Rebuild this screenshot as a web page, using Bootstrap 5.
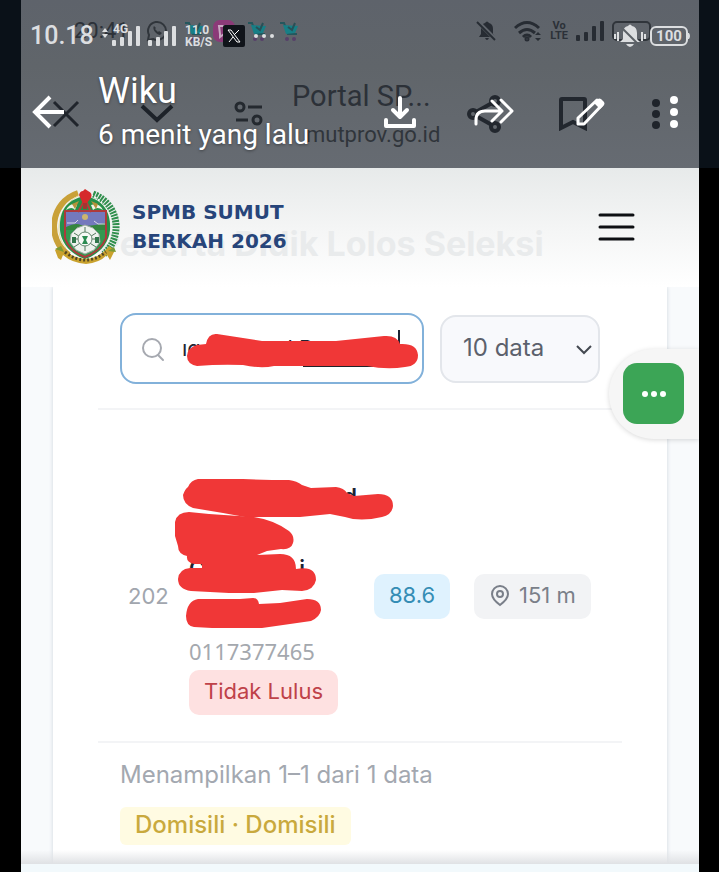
<!DOCTYPE html>
<html lang="id">
<head>
<meta charset="utf-8">
<meta name="viewport" content="width=device-width, initial-scale=1">
<title>SPMB Sumut Berkah 2026</title>
<link href="https://cdn.jsdelivr.net/npm/bootstrap@5.3.0/dist/css/bootstrap.min.css" rel="stylesheet">
<style>
body{background:#000;font-family:Inter,"Noto Sans",sans-serif;color:#5f6470}
svg{display:block;flex:none}
button{border:0;background:none;padding:0}
.viewer{background:#0a1118;padding:0 20px 0 21px;font-family:Roboto,sans-serif}
.viewer-in{height:168px;background:linear-gradient(#5e636b,#60656a 40%,#666b72)}
.layer{position:absolute;inset:0}
.under{color:#2c3138;padding-top:16px}
.over{color:#fff;padding-top:20px}
.srow{height:30px}
.srow-over{height:32px;color:#dcdee0}
.clock-under{font-size:22px;line-height:30px;margin-left:53px;width:72px}
.clock-over{font-size:25px;line-height:30px;font-weight:500;margin-left:9px;width:72px}
.volte{font-size:11px;line-height:10px;font-weight:700;text-align:center}
.rate{font-size:12px;line-height:12px;font-weight:700;width:38px}
.net{font-size:12px;line-height:11px;font-weight:700;left:11px;top:2px}
.battery{border:2px solid #dcdee0;border-radius:6px;font-size:15px;line-height:16px;font-weight:700;width:38px;text-align:center}
.battery-under{border:2px solid #30353b;border-radius:5px;width:39px;height:20px}
.brow{height:72px;margin-top:32px;padding:0 38px 0 31px}
.brow-over{height:80px;margin-top:20px;padding:0 20px 0 11px}
.tab-title{font-size:29px;line-height:36px}
.tab-url{font-size:22px;line-height:30px;padding-left:14px;margin-top:6px;color:#30353b}
.who{font-size:36px;line-height:40px;text-shadow:0 1px 3px rgba(0,0,0,.4)}
.when{font-size:28px;line-height:36px;margin-top:6px;text-shadow:0 1px 3px rgba(0,0,0,.4)}
.sheet{margin:0 20px 0 21px;background:#f8fafc}
.site-nav{height:119px;background:linear-gradient(#e7eaea,#f4f5f5 50%,#fff);padding:0 64px 2px 31px}
.ghost{position:absolute;left:77px;top:56px;font-size:34px;line-height:40px;font-weight:700;color:#e9ebec}
.brand{font-family:"DejaVu Sans",sans-serif;font-size:20px;line-height:29px;font-weight:700;color:#27457a}
.panel{margin:0 32px;padding:26px 45px 0;background:#fff;box-shadow:0 0 4px #cdd5dc}
.tools{padding:0 22px 24px;border-bottom:2px solid #f3f4f6}
.search{border:2px solid #82b1da;border-radius:16px;height:71px;background:#fff;padding-left:18px}
.search input{border:0;outline:0;width:100%;min-width:0;background:none;font-size:22px;color:#1c2434;padding:0}
.pick{width:160px;height:68px;border:2px solid #e3e6eb;border-radius:16px;background-color:#f8f9fc;color:#5c616c;font-size:24px;padding:0 0 2px 21px;background-position:right 4px center;background-size:20px;background-image:url("data:image/svg+xml,%3Csvg xmlns='http://www.w3.org/2000/svg' viewBox='0 0 20 20'%3E%3Cpath d='M3 7l7 7 7-7' fill='none' stroke='%23444951' stroke-width='2'/%3E%3C/svg%3E")}
.results{margin-top:42px;border-bottom:2px solid #f3f4f6;--bs-table-bg:transparent}
.results td{border:0;padding:0;color:#a1a6ae}
.no-col{width:91px;font-size:22px;padding-left:30px!important}
.who-col{padding:26px 0!important}
.hidden-name{font-size:22px;line-height:36px;font-weight:600;color:#1c2434;width:168px;height:160px}
.hidden-name .second{width:116px}
.nisn{font-family:"Noto Sans",sans-serif;font-size:22px;line-height:26px;color:#a4a8ae;margin:0 0 6px}
.chip{display:inline-flex;align-items:center;border-radius:10px;height:45px;padding:0 15px 2px;font-size:22px;white-space:nowrap}
.fail{background:#fee1e1;color:#bf4249}
.score{background:#dff2fe;color:#348db5}
.dist{background:#f2f3f5;color:#7a7f89}
.score-col{width:100px}.dist-col{width:148px}
.foot{padding:14px 22px 18px}
.count{font-size:24px;line-height:36px;color:#a3a8b0;margin:0 0 14px}
.lane{background:#fffbe2;color:#c9a93d;font-weight:500;font-size:24px;height:38px;border-radius:6px}
.float-tab{position:absolute;right:0;top:181px;width:90px;height:90px;border-radius:45px 0 0 45px;background:#f6f6f6;box-shadow:0 1px 5px rgba(0,0,0,.15);padding:14px}
.float-tab button{width:61px;height:61px;border-radius:14px;background:#3ca556}
.shade{height:14px;margin-top:-14px;background:linear-gradient(rgba(210,213,216,0),#dfe1e4);position:relative}
.base{min-height:8px;background:#f2f9fc}
.mask-search{position:absolute;left:62px;top:14px}
.mask-name{position:absolute;left:-14px;top:-2px}
</style>
<script src="https://cdn.jsdelivr.net/npm/bootstrap@5.3.0/dist/js/bootstrap.bundle.min.js"></script>
</head>
<body class="min-vh-100 d-flex flex-column">
<svg width="0" height="0" class="position-absolute" aria-hidden="true">
<defs>
<g id="cart"><path d="M1 3h4l4 11h9" fill="none" stroke="#24575d" stroke-width="2"/><path d="M4 5l15 1-3 7-9 1z" fill="#177f86"/><path d="M9 7l4 3 3-7" fill="none" stroke="#285057" stroke-width="2"/><circle cx="8" cy="19" r="2" fill="#574069"/><circle cx="15" cy="19" r="2" fill="#574069"/></g>
<g id="bars"><rect y="15" width="4" height="6" rx="1"/><rect x="8" y="12" width="4" height="9" rx="1"/><rect x="16" y="6" width="4" height="15" rx="1"/><rect x="24" y="1" width="4" height="20" rx="1"/></g>
</defs>
</svg>
<header class="viewer">
<div class="viewer-in position-relative">
<div class="layer under">
 <div class="srow d-flex align-items-center">
  <span class="clock-under">20:41</span>
  <svg width="22" height="22" viewBox="0 0 22 22" fill="none" stroke="#30353b" stroke-width="2"><path d="M2 20l1-5a9 9 0 1 1 4 4z"/><path d="M8 6c-2 2 1 8 6 9l2-2-3-2-1 1-3-3 1-1z" fill="#30353b" stroke="none"/></svg>
  <svg class="ms-3" width="20" height="22"><use href="#cart"/></svg>
  <svg class="ms-2" width="24" height="24"><rect x="1" y="1" width="22" height="22" rx="7" fill="#8b3a78"/><path d="M7 7h10v8h-5l-4 3v-3z" fill="none" stroke="#c9a9c3" stroke-width="2"/></svg>
  <svg class="ms-2" width="24" height="22"><use href="#cart" x="3"/></svg>
  <svg class="ms-2" width="24" height="22"><use href="#cart" x="3"/></svg>
  <svg class="ms-auto" width="22" height="22" viewBox="0 0 22 22" fill="#272c33"><path d="M3 17l2-3V9q0-5 4-6 2-3 4 0 4 1 4 6v5l2 3zM9 18h4q-2 4-4 0"/><path d="M2 2l18 18" stroke="#60656c" stroke-width="4"/><path d="M1 2l18 18" stroke="#272c33" stroke-width="2"/></svg>
  <svg class="ms-3 me-2" width="28" height="22" viewBox="0 0 28 22" fill="none" stroke="#272c33" stroke-width="3"><path d="M1 8q12-11 24 0M5 13q8-7 16 0M9 17q4-4 8 0"/><circle cx="13" cy="19" r="1"/><path d="M21 15l3-3 3 3zM21 18l3 3 3-3z" fill="#272c33" stroke="none"/></svg>
  <span class="volte">Vo<br>LTE</span>
  <svg class="mx-2" width="28" height="22" fill="#272c33"><use href="#bars"/></svg>
  <span class="battery-under me-5"></span>
 </div>
 <div class="brow d-flex align-items-center">
  <button aria-label="Tutup"><svg width="28" height="28" viewBox="0 0 28 28" fill="none" stroke="#20252c" stroke-width="3"><path d="M2 2l24 24M26 2L2 26"/></svg></button>
  <button class="ms-5 ps-2" aria-label="Buka"><svg class="ms-1" width="34" height="28" viewBox="0 0 34 28" fill="none" stroke="#1d2229" stroke-width="4"><path d="M2 6l15 14L32 6"/></svg></button>
  <button class="ms-5 ps-2" aria-label="Info situs"><svg class="ms-1" width="30" height="26" viewBox="0 0 30 26" fill="none" stroke="#24292f" stroke-width="3"><circle cx="6" cy="6" r="4"/><path d="M14 6h14M2 19h12"/><circle cx="23" cy="19" r="4"/></svg></button>
  <div class="ms-4 ps-1"><div class="tab-title">Portal SP...</div><div class="tab-url">mutprov.go.id</div></div>
  <button class="ms-auto" aria-label="Bagikan"><svg width="36" height="38" viewBox="0 0 36 38" fill="none" stroke="#22272e" stroke-width="4"><circle cx="6" cy="19" r="4"/><circle cx="28" cy="6" r="4"/><circle cx="28" cy="32" r="4"/><path d="M9 17L25 8M9 21l16 9"/></svg></button>
  <button class="ms-5 ps-2" aria-label="Simpan"><svg width="28" height="34" viewBox="0 0 28 34" fill="none" stroke="#22272e" stroke-width="4"><path d="M2 31V3q0-1 1-1h22q1 0 1 1v28l-12-6z"/></svg></button>
  <button class="ms-5 ps-3" aria-label="Menu"><svg width="10" height="30" fill="#1f242b"><circle cx="5" cy="4" r="4"/><circle cx="5" cy="15" r="4"/><circle cx="5" cy="26" r="4"/></svg></button>
 </div>
</div>
<div class="layer over">
 <div class="srow-over d-flex align-items-center">
  <span class="clock-over">10.18</span>
  <span class="position-relative"><svg width="38" height="28" fill="#dcdee0"><path d="M0 10l3-4 3 4zM0 12l3 4 3-4z"/><rect x="10" y="18" width="4" height="6" rx="1"/><rect x="18" y="15" width="4" height="9" rx="1"/><rect x="26" y="9" width="4" height="15" rx="1"/><rect x="34" y="4" width="4" height="20" rx="1"/></svg><span class="net position-absolute">4G</span></span>
  <svg class="ms-2" width="29" height="22" fill="#dcdee0"><use href="#bars"/></svg>
  <span class="rate ms-2">11.0<br>KB/S</span>
  <svg width="22" height="22" viewBox="0 0 22 22"><rect width="22" height="22" rx="2" fill="#10141a"/><path d="M5 5h3l9 12h-3zM16 5l-5 5M6 17l4-5" fill="none" stroke="#fff" stroke-width="1"/></svg>
  <svg class="ms-2" width="22" height="6" fill="#dcdee0"><circle cx="3" cy="3" r="2"/><circle cx="11" cy="3" r="2"/><circle cx="19" cy="3" r="2"/></svg>
  <svg class="ms-auto me-1" width="32" height="24" viewBox="0 0 32 24" fill="#dcdee0"><path d="M6 18l3-3V9q0-6 5-7 2-3 4 0 5 1 5 7v6l3 3zM12 20h8q-4 6-8 0"/><path d="M7 3l19 19" stroke="#5b6066" stroke-width="2"/><path d="M1 10v5M4 8v9M28 8v9M31 10v5" stroke="#dcdee0" stroke-width="2"/></svg>
  <span class="battery">100</span><svg width="3" height="8" fill="#dcdee0" class="me-2"><path d="M0 1h1q2 3 0 6H0z"/></svg>
 </div>
 <div class="brow-over d-flex align-items-center">
  <button aria-label="Kembali"><svg width="34" height="34" viewBox="0 0 34 34" fill="none" stroke="#fff" stroke-width="4"><path d="M32 17H4M18 2L3 17l15 15"/></svg></button>
  <div class="ms-4 ps-1"><div class="who ps-1">Wiku</div><div class="when ps-1">6 menit yang lalu</div></div>
  <button class="ms-auto" aria-label="Unduh"><svg width="34" height="34" viewBox="0 0 34 34" fill="none" stroke="#fff" stroke-width="4" stroke-linecap="round" stroke-linejoin="round"><path d="M17 3v18M10 15l7 7 7-7M3 25v6h28v-6"/></svg></button>
  <button class="ms-5 ps-2" aria-label="Teruskan"><svg width="42" height="30" viewBox="0 0 42 30" fill="none" stroke="#fff" stroke-width="3" stroke-linecap="round" stroke-linejoin="round"><path d="M3 27v-4q0-9 9-9h17M19 4l10 10-10 10M28 3l11 11-11 11"/></svg></button>
  <button class="ms-5 ps-2" aria-label="Edit"><svg class="ms-1" width="30" height="30" viewBox="0 0 30 30" fill="none" stroke="#fff" stroke-width="3" stroke-linejoin="round"><path d="M3 27v-6L22 3l5 5L9 27z"/><path d="M19 6l4-4q1-1 3 0l3 3q1 2 0 3l-4 4z" fill="#fff" stroke="none"/></svg></button>
  <button class="ms-5 ps-3" aria-label="Lainnya"><svg width="10" height="34" fill="#fff"><circle cx="5" cy="5" r="4"/><circle cx="5" cy="17" r="4"/><circle cx="5" cy="29" r="4"/></svg></button>
 </div>
</div>
</div>
</header>

<main class="sheet flex-grow-1 d-flex flex-column position-relative">
<nav class="site-nav d-flex align-items-center position-relative">
 <span class="ghost text-nowrap">Peserta Didik Lolos Seleksi</span>
 <a href="#" class="d-flex align-items-center text-decoration-none position-relative">
  <svg width="68" height="78" viewBox="0 0 68 78" role="img" aria-label="Lambang Sumatera Utara">
   <path d="M26 5C-2 14-6 52 17 67" fill="none" stroke="#c9a139" stroke-width="6"/>
   <path d="M28 7C6 17 1 46 14 60" fill="none" stroke="#efdf9b" stroke-width="1"/>
   <path d="M41 6C69 17 70 50 52 66" fill="none" stroke="#2f8f4c" stroke-width="7" stroke-dasharray="2 1"/>
   <path d="M39 7C62 19 64 47 48 62" fill="none" stroke="#f4f5ef" stroke-width="2" stroke-dasharray="2 2"/>
   <path d="M33 8C12 12 7 26 8 42 9 56 20 67 33 71 46 67 57 56 58 42 59 26 53 12 33 8z" fill="#269048"/>
   <path d="M25 17q-7-3-11 5 6-4 9 0zM39 17q8-3 12 5-6-4-10 0z" fill="#f0f3e6"/>
   <path d="M13 23h41v27Q49 63 33 69 17 63 13 50z" fill="#34984f" stroke="#ad3a3c" stroke-width="2"/>
   <path d="M14 24h39v15H14z" fill="#7479bd"/><path d="M14 39q10-5 15-2 8 2 24-2v7H14z" fill="#35863f"/>
   <path d="M20 16l7-3-4 8zM46 16l-7-3 5 8z" fill="#b5923b"/>
   <path d="M26 24l6-11M39 24l-5-11" stroke="#b53b38" stroke-width="2"/>
   <path d="M27 7q1-4 4-4l2-2 3 2q5 2 3 7l-5 6h-3z" fill="#d52a2b"/>
   <path d="M31 15h4v6h-4z" fill="#a33531"/><circle cx="33" cy="29" r="3" fill="#ccb56e"/><path d="M15 35h8l3-3M42 33l4 3h7" stroke="#d7d8e6" fill="none"/>
   <path d="M33 37l8 3 6 6 1 8-6 8-9 4-9-4-6-8 1-8 6-6z" fill="#edf2ed" stroke="#9da9a3"/>
   <path d="M33 39v24M22 45l22 14M44 45L22 59M21 51h25" stroke="#53765d"/><circle cx="33" cy="51" r="7" fill="#f7f9f6" stroke="#63866e"/><path d="M30 48h6l-2 4 2 4h-6l2-4z" fill="#2b8b51"/>
   <path d="M20 49h4v6h-4zM43 49h4v6h-4z" fill="#31764b"/>
   <path d="M8 58l-5 4 3 8 3 2 2-5q9 8 23 9 13-1 21-9l3 5 5-10-6-4q-9 12-23 13-15-1-26-13z" fill="#c9a22e"/>
   <path d="M13 64q20 16 41 0" fill="none" stroke="#534622" stroke-width="3" stroke-dasharray="2 2"/>
   <path d="M3 61l6-3 3 6zM56 63l6-4 2 5z" fill="#7a9a35"/>
  </svg>
  <span class="brand ms-2 ps-1">SPMB SUMUT<br>BERKAH 2026</span>
 </a>
 <button class="ms-auto" aria-label="Menu"><svg width="37" height="30" stroke="#0d0f12" stroke-width="3" stroke-linecap="round"><path d="M2 3h33M2 15h33M2 27h33"/></svg></button>
</nav>

<section class="panel flex-grow-1">
 <div class="tools d-flex align-items-center gap-3">
  <div class="search position-relative flex-grow-1 d-flex align-items-center">
   <svg width="26" height="26" viewBox="0 0 26 26" fill="none" stroke="#a6a9b0" stroke-width="2" stroke-linecap="round"><circle cx="12" cy="12" r="9"/><path d="M18 19l5 5"/></svg>
   <input class="ms-3" type="text" aria-label="Cari peserta" value="ıg&nbsp;&nbsp;&nbsp;&nbsp;&nbsp;&nbsp;&nbsp;&nbsp;&nbsp;&nbsp;&nbsp;&nbsp;&nbsp;&nbsp;l P">
   <svg class="mask-search" width="238" height="42" aria-hidden="true"><path d="M119 37h75" stroke="#20232a" stroke-width="2"/><path d="M215 1v20" stroke="#1c2434" stroke-width="2"/><path d="M13 37q-10-2-10-10 0-8 10-11l9-1q2-11 11-10l45 7h74l48-5q13-1 16 8 17-1 18 11 0 11-13 12-18 3-38-1H90q-13 3-31-1-23-1-46 1z" fill="#f03737"/></svg>
  </div>
  <select class="form-select pick flex-shrink-0" aria-label="Jumlah data"><option>10 data</option></select>
 </div>
 <table class="table results align-middle mb-0">
  <tbody><tr>
   <td class="no-col">202</td>
   <td class="who-col">
    <div class="hidden-name position-relative">
     <div class="text-end">d</div><br>
     <div class="second d-flex justify-content-between"><span>C</span><span>i</span></div>
     <svg class="mask-name" width="222" height="156" viewBox="175 476 222 156" aria-hidden="true" fill="#f03737">
      <path d="M198 479h45l29 1h17q8 1 13 5l9 3 25-1q8 1 11 6l7 3 24-2q15 0 15 12-1 9-11 11-22 5-37 0l-15-3-30 3h-55l-22-4-30-5q-10-4-10-13 2-6 5-8 3-7 10-8z"/>
      <path d="M175 522q2-10 14-10l20 2 45 3q20 3 35 14 6 5 4 12-2 7-12 6l-14 2-10 4 23-1q16 0 16 15 20-4 20 11-2 10-14 11l-20-1-28 3h-25l-38-2q-13-2-13-12 1-10 12-11h12v-4h-8q-8-2-7-8-9-2-9-10l-3-10z"/>
      <path d="M198 599h42l13-1q5 0 6 6l21-1 27-4q14 0 14 11-1 7-10 11l-49 7h-50l-18-1q-8-1-8-11 1-15 12-17z"/>
     </svg>
    </div>
    <p class="nisn">0117377465</p>
    <span class="chip fail">Tidak Lulus</span>
   </td>
   <td class="score-col"><span class="chip score">88.6</span></td>
   <td class="dist-col"><span class="chip dist gap-2"><svg width="22" height="22" viewBox="0 0 22 22" fill="none" stroke="#7a7f89" stroke-width="2"><path d="M11 20q-8-6-8-11a8 8 0 0 1 16 0q0 5-8 11z"/><circle cx="11" cy="9" r="3"/></svg>151 m</span></td>
  </tr></tbody>
 </table>
 <div class="foot"><p class="count">Menampilkan 1–1 dari 1 data</p><span class="chip lane">Domisili · Domisili</span></div>
</section>
<div class="shade"></div>
<div class="base"></div>
<div class="float-tab"><button aria-label="Obrolan" class="d-flex align-items-center justify-content-center"><svg width="26" height="8" fill="#fff"><circle cx="4" cy="4" r="3"/><circle cx="13" cy="4" r="3"/><circle cx="22" cy="4" r="3"/></svg></button></div>
</main>
</body>
</html>
